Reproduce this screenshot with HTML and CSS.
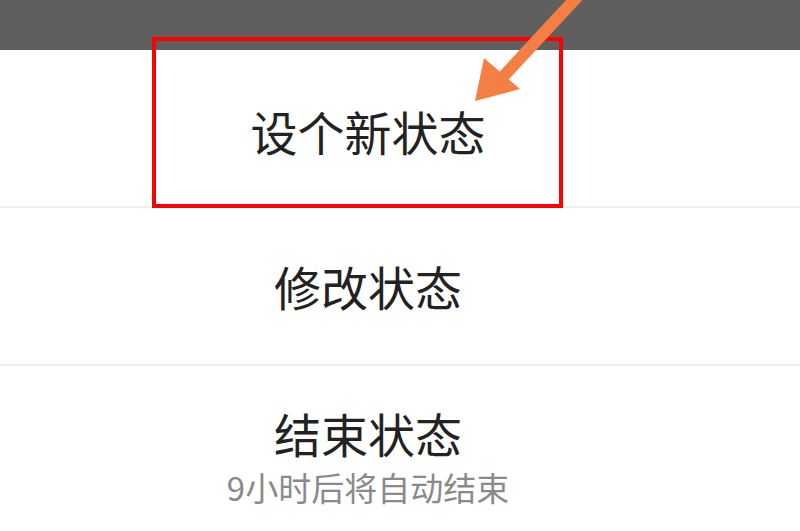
FILE: index.html
```html
<!DOCTYPE html>
<html lang="zh-CN">
<head>
    <meta charset="UTF-8">
    <meta name="viewport" content="width=device-width, initial-scale=1.0">
    <title>状态</title>
    <link rel="stylesheet" href="styles.css">
</head>
<body>
    <div class="screen">
        <div class="topbar"></div>
        <div class="menu">
            <div class="item item-first">
                <span class="title">设个新状态</span>
            </div>
            <div class="item">
                <span class="title">修改状态</span>
            </div>
            <div class="item item-last">
                <span class="title">结束状态</span>
                <span class="sub">9小时后将自动结束</span>
            </div>
        </div>

        <div class="highlight"></div>
        <svg class="arrow" width="140" height="110" viewBox="0 0 140 110">
            <line x1="128" y1="-4" x2="50" y2="80" stroke="#f47f45" stroke-width="12"/>
            <polygon points="25,101 34,58 70,89" fill="#f47f45"/>
        </svg>
    </div>
</body>
</html>
```

FILE: styles.css
```css
body {
    margin: 0;
    background: #fff;
    font-family: "Noto Sans CJK SC", "Noto Sans", sans-serif;
}
.screen {
    position: relative;
    width: 800px;
    height: 531px;
    overflow: hidden;
}
.topbar {
    height: 50px;
    background-color: #5f5f5f;
}
.menu {
    display: flex;
    flex-direction: column;
}
.item {
    height: 156px;
    display: flex;
    flex-direction: column;
    align-items: center;
    justify-content: center;
    padding-right: 64px;
    border-bottom: 2px solid #efefef;
    box-sizing: content-box;
}
.item-first {
    padding-top: 6px;
    height: 150px;
}
.item-last {
    border-bottom: none;
    height: 165px;
    justify-content: flex-start;
    padding-top: 35px;
    box-sizing: border-box;
}
.title {
    font-size: 47px;
    line-height: 64px;
    color: #222;
}
.sub {
    font-size: 33px;
    line-height: 44px;
    color: #8a8a8a;
}
.highlight {
    position: absolute;
    left: 152px;
    top: 37px;
    width: 403px;
    height: 163px;
    border: 4px solid #f00;
}
.arrow {
    position: absolute;
    left: 450px;
    top: 0;
}
```
